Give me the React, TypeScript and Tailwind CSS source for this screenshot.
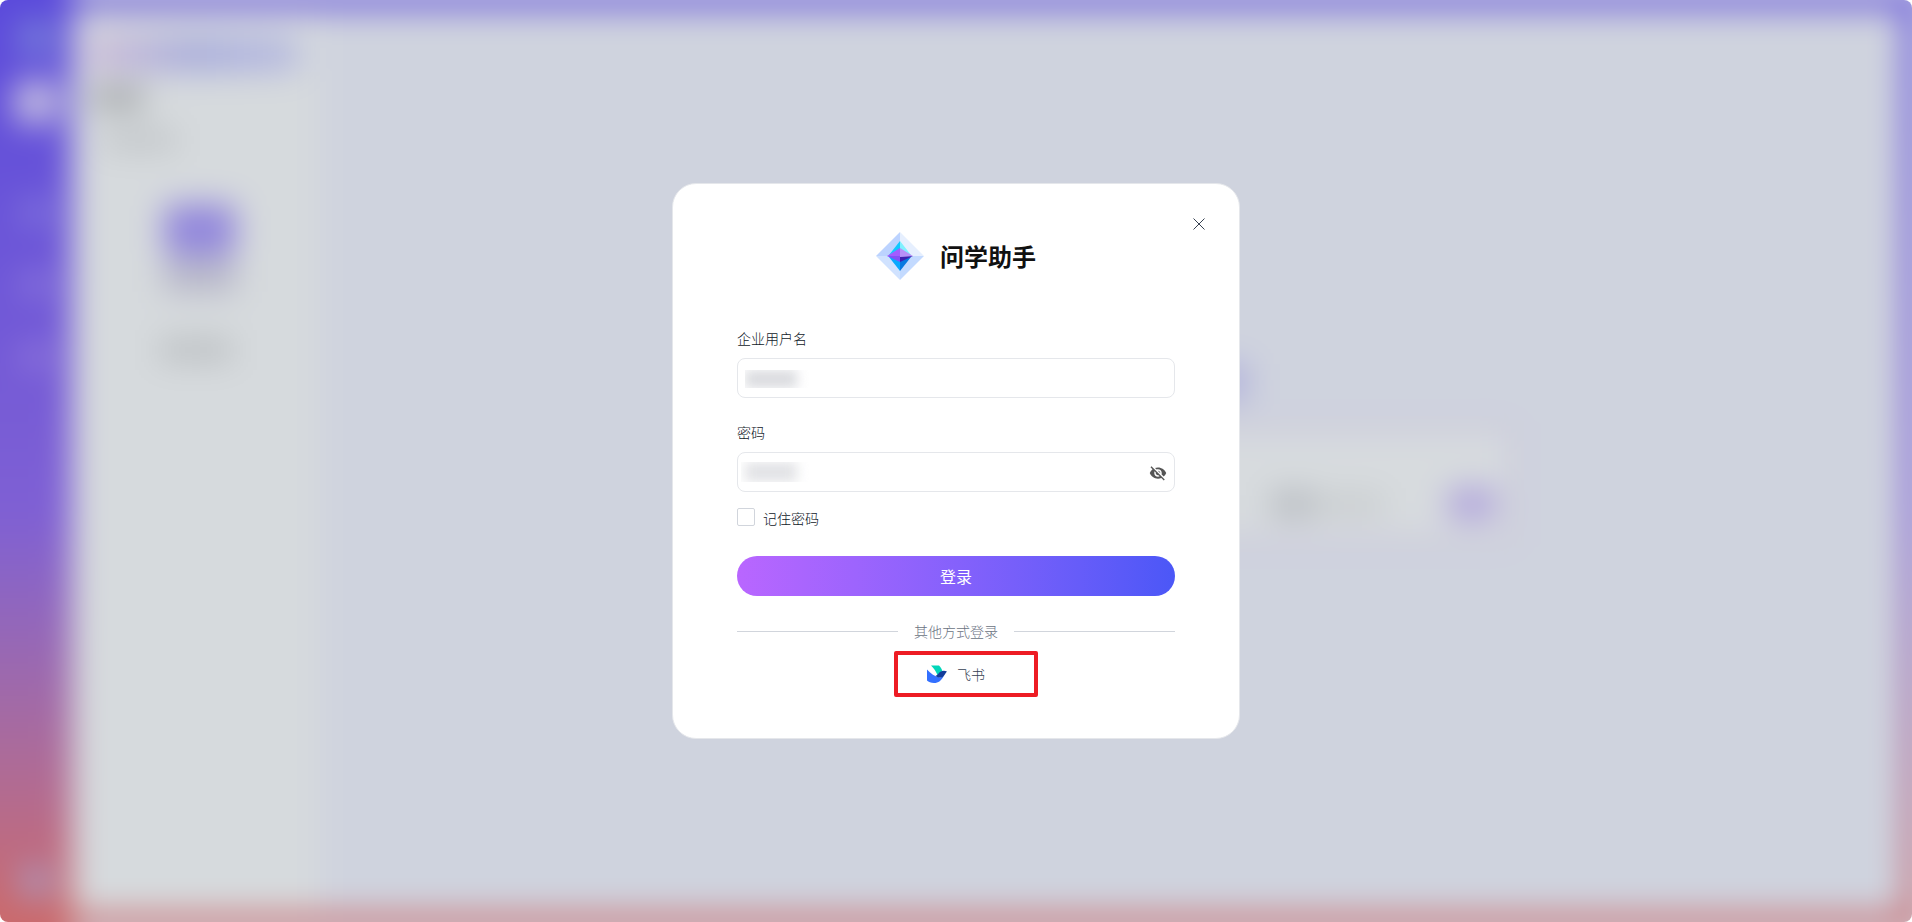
import React from "react"
import { MdVisibilityOff } from "react-icons/md"

const Logo = () => (
    <svg viewBox="0 0 48 48" className="h-12 w-12" aria-hidden="true">
        <path d="M24 0 L0 24 L24 24 Z" fill="#bcd3ff" />
        <path d="M24 0 L48 24 L24 24 Z" fill="#e6effe" />
        <path d="M0 24 L24 48 L24 24 Z" fill="#d0e2ff" />
        <path d="M48 24 L24 48 L24 24 Z" fill="#c3daff" />
        <path d="M24 9 L13 23 L24 23 Z" fill="#10c8ff" />
        <path d="M24 9 L35 23 L24 23 Z" fill="#80f0ff" />
        <path d="M13 25 L24 39 L24 25 Z" fill="#08a8ff" />
        <path d="M35 25 L24 39 L24 25 Z" fill="#0878e0" />
        <path d="M11 24 L24 16 L24 25 Z" fill="#a45cff" />
        <path d="M37 24 L24 16 L24 25 Z" fill="#b890f8" />
        <path d="M11 24 L24 30 L24 24 Z" fill="#8450f8" />
        <path d="M37 24 L24 30 L24 25 Z" fill="#4020b0" />
    </svg>
)

const FeishuIcon = () => (
    <svg viewBox="0 0 20 20" className="h-5 w-5" aria-hidden="true">
        <path d="M4 1.500 H12 C14 3.500 15 5.500 15.500 7.500 C13 8 12 9.500 10.500 11 C9 7.500 7 4.500 4 1.500 Z" fill="#00d6b9" />
        <path d="M0 5.500 C3.500 9.500 8 12.500 13 13.500 C14.500 13.500 16 12.500 17 11.500 C14.500 16.500 11.500 19 7 19 C4 19 1.500 18 0 16.500 Z" fill="#3370ff" />
        <path d="M20 7.500 C16.500 6 13.500 7 11.500 9.500 C10.500 10.500 9.500 11.500 8.500 12 C12.500 14.500 16 14 17.500 11 C18.500 9.500 19 8.500 20 7.500 Z" fill="#133c9a" />
    </svg>
)

const CloseIcon = () => (
    <svg viewBox="0 0 12 12" className="h-3 w-3" stroke="#374151" aria-hidden="true">
        <path d="M0.500 0.500 L11.500 11.500 M11.500 0.500 L0.500 11.500" />
    </svg>
)

// The app behind the dialog, blurred. It runs past the window so that the blur does not fade out at the edges
const Workspace = () => (
    <div className="absolute -inset-12 flex bg-linear-to-b from-[#5848dc] via-[#7f60d4] via-55% to-[#cb6a6c] to-95% blur-lg" aria-hidden="true">
        <div className="flex w-30 flex-col items-center justify-between pt-17 pb-18 pl-12">
            <div className="flex flex-col items-center gap-6">
                <div className="h-9 w-9 rounded-full bg-[#7b84d8]" />
                <div className="h-11 w-11 rounded-xl bg-[#c4bee0]" />
                <div className="mt-13 h-6 w-7 bg-[#8478dc]" />
                <div className="mt-6 h-6 w-7 bg-[#8c78dc]" />
                <div className="mt-6 h-6 w-7 bg-[#9078dc]" />
            </div>
            <div className="h-8 w-8 rounded-full bg-[#a89cc4]" />
        </div>
        <div className="flex flex-1 border-y-40 border-r-40 border-[#cfd3de] py-4 pr-4">
            <div className="flex flex-1 bg-[#cfd3de]">
                <div className="w-62 bg-[#d6dadd] pt-7 pr-5 pl-4">
                    <div className="h-9 rounded-lg bg-linear-to-r from-[#cdbcd8] via-[#a8acdc] to-[#b8bce0]" />
                    <div className="mt-4 ml-1 h-5 w-13 bg-[#9fa2a5]" />
                    <div className="mt-6 ml-4 h-4 w-18 bg-[#bbbfc2]" />
                    <div className="mt-14 ml-19 h-13 w-18 rounded-lg bg-[#9287dc]" />
                    <div className="mt-1 ml-19 h-8 w-18 bg-[#b6b6c8]" />
                    <div className="mt-12 ml-18 h-5 w-18 bg-[#b8bcbf]" />
                </div>
                <div className="flex flex-1 flex-col items-center pt-89">
                    <div className="h-9 w-68 bg-[#b0b0dc]" />
                    <div className="mt-5 flex h-32 w-204 items-end justify-end gap-16 rounded-xl border-12 border-[#cccbdc] bg-[#d7dbde] p-3 pb-4">
                        <div className="flex h-8 items-center">
                            <div className="h-6 w-10 bg-[#b4b8be]" />
                            <div className="h-4 w-18 bg-[#c4c8ca]" />
                        </div>
                        <div className="h-8 w-12 rounded-lg bg-[#b0a4dd]" />
                    </div>
                </div>
            </div>
        </div>
    </div>
)

export default function App(): JSX.Element {
    const [showPassword, setShowPassword] = React.useState(false)

    return (
        <div className="relative flex min-h-screen items-center justify-center overflow-hidden rounded-lg font-['Noto_Sans_CJK_SC',sans-serif] font-light">
            <Workspace />
            <div role="dialog" aria-labelledby="title" className="relative w-full max-w-[568px] rounded-3xl border border-gray-200 bg-white px-16 pt-12 pb-13">
                <button type="button" aria-label="关闭" className="absolute top-6 right-6 flex h-8 w-8 items-center justify-center">
                    <CloseIcon />
                </button>
                <div className="flex items-center justify-center gap-4">
                    <Logo />
                    <h1 id="title" className="text-2xl font-bold text-[#111111]">问学助手</h1>
                </div>
                <form className="mt-12 text-sm text-gray-900" onSubmit={(e) => e.preventDefault()}>
                    <label htmlFor="username" className="block">企业用户名</label>
                    <div className="relative mt-2.5">
                        <input id="username" type="text" className="block h-10 w-full rounded-lg border border-gray-200 px-2 outline-none" />
                        <div className="pointer-events-none absolute top-3 left-2 h-[18px] w-16 overflow-hidden">
                            <div className="h-full w-13 bg-[#dadbdf] blur-[6px]" />
                        </div>
                    </div>
                    <label htmlFor="password" className="mt-6 block">密码</label>
                    <div className="relative mt-2.5">
                        <input id="password" type={showPassword ? "text" : "password"} className="block h-10 w-full rounded-lg border border-gray-200 px-2 pr-9 outline-none" />
                        <div className="pointer-events-none absolute top-2.5 left-1 h-5 w-18 overflow-hidden pl-1">
                            <div className="h-full w-13 bg-[#e2e3e6] blur-[6px]" />
                        </div>
                        <button type="button" aria-label="显示密码" onClick={() => setShowPassword(!showPassword)} className="absolute top-3 right-2 text-[#555555]">
                            <MdVisibilityOff size={18} />
                        </button>
                    </div>
                    <div className="mt-4 flex h-6">
                        <input id="remember" type="checkbox" className="h-[18px] w-[18px] appearance-none rounded-xs border border-gray-300 checked:bg-[#4b57f7]" />
                        <label htmlFor="remember" className="ml-2">记住密码</label>
                    </div>
                    <button type="submit" className="mt-6 block h-10 w-full rounded-full bg-linear-to-r from-[#b966ff] to-[#4b57f7] text-base font-normal text-white">登录</button>
                </form>
                <div className="mt-6 flex items-center gap-4 text-sm leading-[22px] text-gray-500">
                    <div className="h-px flex-1 bg-gray-300" />
                    其他方式登录
                    <div className="h-px flex-1 bg-gray-300" />
                </div>
                <div className="mt-5 flex justify-center">
                    <a href="#" className="relative flex h-6 items-center gap-2.5 text-sm text-gray-700">
                        <FeishuIcon />
                        飞书
                        <span className="absolute -top-[11px] -right-[53px] -bottom-[11px] -left-[33px] rounded-xs border-4 border-[#ed1c24]" />
                    </a>
                </div>
            </div>
        </div>
    )
}
